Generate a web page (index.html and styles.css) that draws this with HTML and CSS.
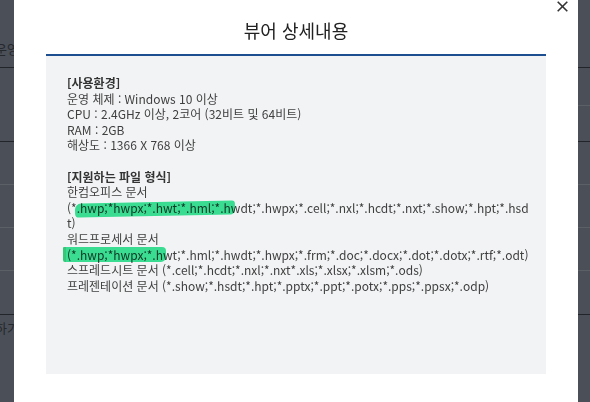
FILE: index.html
```html
<!DOCTYPE html>
<html lang="ko">
<head>
<meta charset="utf-8">
<title>뷰어 상세내용</title>
<link rel="stylesheet" href="styles.css">
</head>
<body>
<div class="backdrop">
  <div class="bd-row bd-first"><span class="bd-text">운영</span></div>
  <div class="bd-row bd-second"><div class="bd-sub"></div></div>
  <div class="bd-row bd-light"></div>
  <div class="bd-row bd-light"></div>
  <div class="bd-row bd-light"></div>
  <div class="bd-row bd-dark"></div>
  <div class="bd-row bd-last"><span class="bd-text">하기</span></div>
</div>
<div class="modal">
  <button class="close" aria-label="닫기">
    <svg width="11" height="11" viewBox="0 0 11 11"><path d="M0.7 0.7L10.3 10.3M10.3 0.7L0.7 10.3" stroke="#333" stroke-width="1.6" fill="none"/></svg>
  </button>
  <h1 class="title">뷰어 상세내용</h1>
  <div class="content">
    <p class="block">
      <strong>[사용환경]</strong><br>
      운영 체제 : Windows 10 이상<br>
      CPU : 2.4GHz 이상, 2코어 (32비트 및 64비트)<br>
      RAM : 2GB<br>
      해상도 : 1366 X 768 이상
    </p>
    <p class="block">
      <strong>[지원하는 파일 형식]</strong><br>
      한컴오피스 문서<br>
      <span class="nw">(*<span class="hl hl-a">.hwp;*hwpx;*.hwt;*.hml;*.h</span>wdt;*.hwpx;*.cell;*.nxl;*.hcdt;*.nxt;*.show;*.hpt;*.hsd</span><br>
      t)<br>
      워드프로세서 문서<br>
      <span class="nw"><span class="hl hl-b">(*.hwp;*hwpx;*.h</span>wt;*.hml;*.hwdt;*.hwpx;*.frm;*.doc;*.docx;*.dot;*.dotx;*.rtf;*.odt)</span><br>
      스프레드시트 문서 (*.cell;*.hcdt;*.nxl;*.nxt*.xls;*.xlsx;*.xlsm;*.ods)<br>
      프레젠테이션 문서 (*.show;*.hsdt;*.hpt;*.pptx;*.ppt;*.potx;*.pps;*.ppsx;*.odp)
    </p>
  </div>
</div>
</body>
</html>
```

FILE: styles.css
```css
html, body {
  margin: 0;
  padding: 0;
}
body {
  width: 590px;
  height: 402px;
  overflow: hidden;
  background: #4b4f57;
  font-family: "Noto Sans CJK KR", "Noto Sans", sans-serif;
}

/* dimmed page behind the modal */
.backdrop {
  margin-left: -5px;
  color: #25282d;
  font-size: 13px;
}
.bd-row {
  box-sizing: border-box;
}
.bd-first {
  height: 68px;
  padding-top: 40px;
  line-height: 18px;
  border-bottom: 1px solid #22252a;
}
.bd-second {
  height: 74px;
  border-bottom: 1px solid #22252a;
}
.bd-sub {
  margin-left: 300px;
  height: 37px;
  border-bottom: 1px solid #5b5f66;
}
.bd-light {
  height: 43px;
  border-bottom: 1px solid #5b5f66;
}
.bd-dark {
  height: 44px;
  border-bottom: 1px solid #22252a;
}
.bd-last {
  padding-top: 4px;
  line-height: 18px;
}

/* modal */
.modal {
  position: fixed;
  top: 0;
  left: 14px;
  width: 564px;
  bottom: -20px;
  background: #fff;
  box-sizing: border-box;
  padding: 0 32px;
}
.close {
  position: absolute;
  top: 0;
  right: 9px;
  width: 13px;
  height: 13px;
  padding: 1px;
  border: 0;
  background: none;
  display: flex;
  align-items: center;
  justify-content: center;
}
.title {
  margin: 0;
  padding-top: 6px;
  height: 48px;
  line-height: 48px;
  text-align: center;
  font-size: 18px;
  font-weight: 400;
  color: #222;
  border-bottom: 2px solid #1d4e8f;
}
.content {
  background: #f2f3f5;
  height: 318px;
  box-sizing: border-box;
  padding: 19px 20px 0 21px;
  font-size: 12px;
  line-height: 15.6px;
  color: #3f3f3f;
}
.block {
  margin: 0 0 15.6px;
}
.block strong {
  font-weight: 700;
  color: #333;
}
.nw {
  white-space: nowrap;
}
.hl {
  position: relative;
}
.hl::after {
  content: "";
  position: absolute;
  background: #27e58c;
  mix-blend-mode: multiply;
  opacity: 0.9;
  border-radius: 6px 3px 5px 4px;
}
.hl-a::after {
  left: -2px;
  right: -4px;
  top: 3px;
  height: 14px;
  transform: rotate(-1.2deg);
}
.hl-b::after {
  left: -4px;
  right: -3px;
  top: 1px;
  height: 15px;
  border-left: 3px solid #1fcf6f;
  border-radius: 1px 4px 5px 2px;
}
```
